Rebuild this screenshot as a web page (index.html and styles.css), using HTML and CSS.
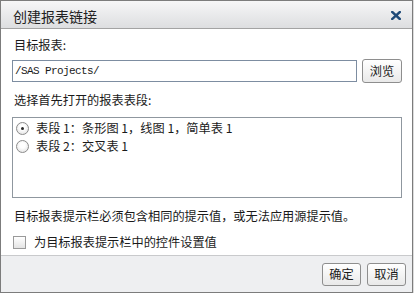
FILE: index.html
```html
<!doctype html>
<html lang="zh-CN">
<head>
  <meta charset="UTF-8">
  <title>创建报表链接</title>
  <link rel="stylesheet" href="styles.css">
</head>
<body>
  <div class="dialog">
    <div class="titlebar">
      <span class="title">创建报表链接</span>
      <svg class="close" width="10" height="9" viewBox="0 0 10 9">
        <path d="M1.2 1 L8.8 8 M8.8 1 L1.2 8" stroke="#1f4a78" stroke-width="2.4" stroke-linecap="square"/>
      </svg>
    </div>

    <div class="content">
      <div class="label first">目标报表:</div>
      <div class="path-row">
        <div class="path-input">/SAS Projects/</div>
        <button class="btn">浏览</button>
      </div>

      <div class="label second">选择首先打开的报表表段:</div>
      <div class="list">
        <div class="option"><span class="radio checked"></span>表段 1：条形图 1，线图 1，简单表 1</div>
        <div class="option"><span class="radio"></span>表段 2：交叉表 1</div>
      </div>

      <div class="note">目标报表提示栏必须包含相同的提示值，或无法应用源提示值。</div>
      <div class="check"><span class="box"></span>为目标报表提示栏中的控件设置值</div>
    </div>

    <div class="footer">
      <button class="btn">确定</button>
      <button class="btn">取消</button>
    </div>
  </div>
</body>
</html>
```

FILE: styles.css
```css
body {
  margin: 0;
  background: #dcdcdc;
  font-family: "Noto Sans CJK SC", "Noto Sans", sans-serif;
  font-size: 12.2px;
  color: #1a1a1a;
}
.dialog {
  width: 413px;
  height: 293px;
  box-sizing: border-box;
  border: 1px solid #7c7c7c;
  background: #fff;
  display: flex;
  flex-direction: column;
}
.titlebar {
  height: 28px;
  box-sizing: border-box;
  padding: 2px 11px 0 12px;
  display: flex;
  align-items: center;
  justify-content: space-between;
  background: linear-gradient(#f6f6f7, #dddee0);
  border-bottom: 1px solid #a3a3a3;
}
.title {
  font-size: 14px;
  color: #222;
}
.close {
  display: block;
  margin-top: -1px;
}
.content {
  flex: 1;
  padding: 0 10px 0 11px;
}
.label {
  line-height: 16px;
  padding-left: 2px;
}
.label.first {
  margin-top: 8px;
}
.label.second {
  margin-top: 9px;
}
.path-row {
  display: flex;
  align-items: center;
  gap: 5px;
  margin-top: 6px;
}
.path-input {
  flex: 1;
  height: 22px;
  box-sizing: border-box;
  border: 1px solid #7d8da1;
  padding: 2px 0 0 2px;
  font-family: "Liberation Mono", monospace;
  font-size: 11px;
  letter-spacing: -0.6px;
  line-height: 17px;
}
.btn {
  width: 40px;
  height: 24px;
  padding: 0;
  border: 1px solid #8e8e8e;
  border-radius: 3px;
  background: linear-gradient(#ffffff, #e9e9e9);
  font-family: inherit;
  font-size: 12.2px;
  color: #1a1a1a;
}
.list {
  margin-top: 9px;
  height: 81px;
  box-sizing: border-box;
  border: 1px solid #8f979f;
  padding-top: 1px;
}
.option {
  display: flex;
  align-items: center;
  height: 18px;
  padding-left: 3px;
}
.radio {
  width: 11px;
  height: 11px;
  border: 1px solid #8b8b8b;
  border-radius: 50%;
  background: radial-gradient(circle at 50% 40%, #ffffff 30%, #dcdcdc 100%);
  margin-right: 7px;
  position: relative;
}
.radio.checked::after {
  content: '';
  position: absolute;
  left: 4px;
  top: 4px;
  width: 3px;
  height: 3px;
  border-radius: 50%;
  background: #2a2a2a;
}
.note {
  margin-top: 10px;
  line-height: 16px;
  padding-left: 2px;
}
.check {
  display: flex;
  align-items: center;
  margin-top: 10px;
  line-height: 16px;
  padding-left: 1px;
}
.box {
  width: 11px;
  height: 11px;
  border: 1px solid #9a9a9a;
  background: linear-gradient(#ffffff, #e4e4e4);
  margin-right: 8px;
}
.footer {
  height: 36px;
  border-top: 1px solid #c9cacc;
  background: #eeeff1;
  display: flex;
  align-items: center;
  justify-content: flex-end;
  gap: 6px;
  padding-right: 6px;
}
.footer .btn {
  width: 39px;
  height: 23px;
}
```
